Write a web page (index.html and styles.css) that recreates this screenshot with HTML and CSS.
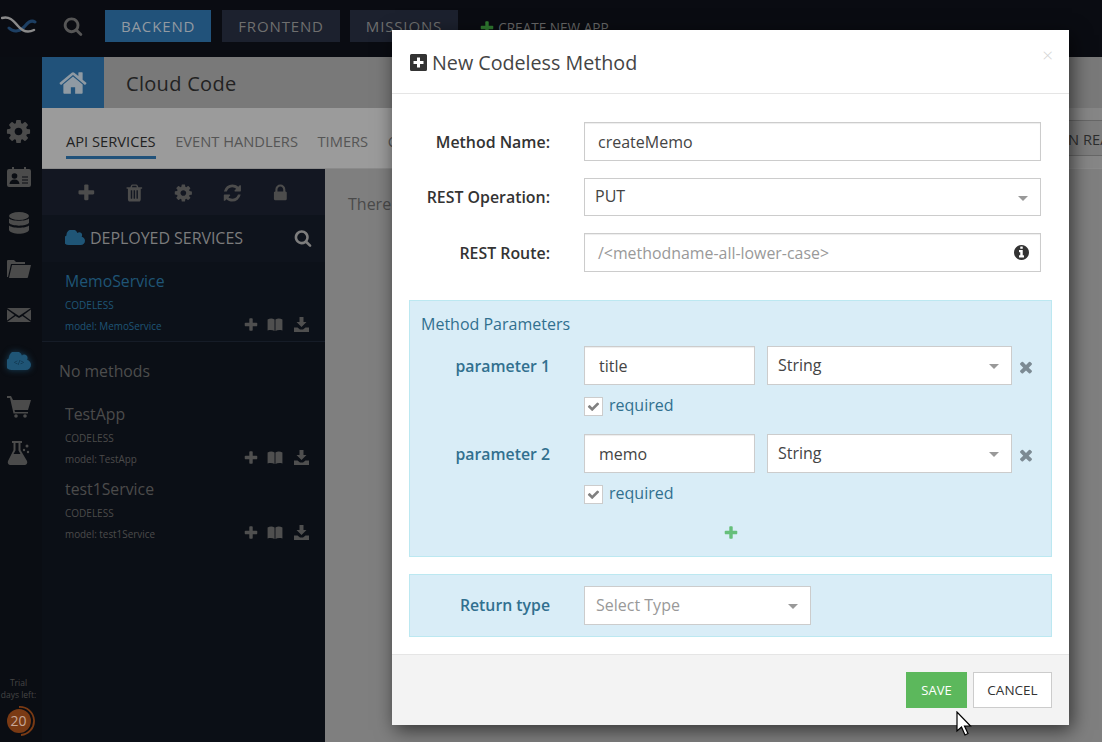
FILE: index.html
```html
<!DOCTYPE html>
<html lang="en">
<head>
    <meta charset="UTF-8">
    <title>Cloud Code</title>
    <link rel="stylesheet" href="styles.css">
</head>
<body>
    <svg class="sprites" width="0" height="0">
        <symbol id="i-search" viewBox="0 0 1792 1792"><path d="M1216 832q0-185-131.5-316.5t-316.5-131.5-316.5 131.5-131.5 316.5 131.5 316.5 316.5 131.5 316.5-131.5 131.5-316.5zm512 832q0 52-38 90t-90 38q-54 0-90-38l-343-342q-179 124-399 124-143 0-273.5-55.5t-225-150-150-225-55.5-273.5 55.5-273.5 150-225 225-150 273.5-55.5 273.5 55.5 225 150 150 225 55.5 273.5q0 220-124 399l343 343q37 37 37 90z"/></symbol>
        <symbol id="i-plus" viewBox="0 0 1792 1792"><path d="M1600 736v192q0 40-28 68t-68 28h-416v416q0 40-28 68t-68 28h-192q-40 0-68-28t-28-68v-416h-416q-40 0-68-28t-28-68v-192q0-40 28-68t68-28h416v-416q0-40 28-68t68-28h192q40 0 68 28t28 68v416h416q40 0 68 28t28 68z"/></symbol>
        <symbol id="i-times" viewBox="0 0 1792 1792"><path d="M1490 1322q0 40-28 68l-136 136q-28 28-68 28t-68-28l-294-294-294 294q-28 28-68 28t-68-28l-136-136q-28-28-28-68t28-68l294-294-294-294q-28-28-28-68t28-68l136-136q28-28 68-28t68 28l294 294 294-294q28-28 68-28t68 28l136 136q28 28 28 68t-28 68l-294 294 294 294q28 28 28 68z"/></symbol>
        <symbol id="i-cog" viewBox="0 0 1792 1792"><path d="M1152 896q0-106-75-181t-181-75-181 75-75 181 75 181 181 75 181-75 75-181zm512-109v222q0 12-8 23t-20 13l-185 28q-19 54-39 91 35 50 107 138 10 12 10 25t-9 23q-27 37-99 108t-94 71q-12 0-26-9l-138-108q-44 23-91 38-16 136-29 186-7 28-36 28h-222q-14 0-24.5-8.5t-11.5-21.5l-28-184q-49-16-90-37l-141 107q-10 9-25 9-14 0-25-11-126-114-165-168-7-10-7-23 0-12 8-23 15-21 51-66.5t54-70.5q-27-50-41-99l-183-27q-13-2-21-12.5t-8-23.5v-222q0-12 8-23t19-13l186-28q14-46 39-92-40-57-107-138-10-12-10-24 0-10 9-23 26-36 98.5-107.5t94.5-71.5q13 0 26 10l138 107q44-23 91-38 16-136 29-186 7-28 36-28h222q14 0 24.5 8.5t11.5 21.5l28 184q49 16 90 37l142-107q9-9 24-9 13 0 25 10 129 119 165 170 7 8 7 22 0 12-8 23-15 21-51 66.5t-54 70.5q26 50 41 98l183 28q13 2 21 12.5t8 23.5z"/></symbol>
        <symbol id="i-home" viewBox="0 0 1792 1792"><path d="M1472 992v480q0 26-19 45t-45 19h-384v-384h-256v384h-384q-26 0-45-19t-19-45v-480q0-1 .5-3t.5-3l575-474 575 474q1 2 1 6zm223-69l-62 74q-8 9-21 11h-3q-13 0-21-7l-692-577-692 577q-12 8-24 7-13-2-21-11l-62-74q-8-10-7-23.5t11-21.5l719-599q32-26 76-26t76 26l244 204v-195q0-14 9-23t23-9h192q14 0 23 9t9 23v408l219 182q10 8 11 21.5t-7 23.5z"/></symbol>
        <symbol id="i-lock" viewBox="0 0 1792 1792"><path d="M640 768h512v-192q0-106-75-181t-181-75-181 75-75 181v192zm832 96v576q0 40-28 68t-68 28h-960q-40 0-68-28t-28-68v-576q0-40 28-68t68-28h32v-192q0-184 132-316t316-132 316 132 132 316v192h32q40 0 68 28t28 68z"/></symbol>
        <symbol id="i-refresh" viewBox="0 0 1792 1792"><path d="M1639 1056q0 5-1 7-64 268-268 434.5t-478 166.5q-146 0-282.5-55t-243.5-157l-129 129q-19 19-45 19t-45-19-19-45v-448q0-26 19-45t45-19h448q26 0 45 19t19 45-19 45l-137 137q71 66 161 102t187 36q134 0 250-65t186-179q11-17 53-117 8-23 30-23h192q13 0 22.5 9.5t9.5 22.5zm25-800v448q0 26-19 45t-45 19h-448q-26 0-45-19t-19-45 19-45l138-138q-148-137-349-137-134 0-250 65t-186 179q-11 17-53 117-8 23-30 23h-199q-13 0-22.5-9.5t-9.5-22.5v-7q65-268 270-434.5t480-166.5q146 0 284 55.5t245 156.5l130-129q19-19 45-19t45 19 19 45z"/></symbol>
        <symbol id="i-trash" viewBox="0 0 1792 1792"><path d="M704 1376v-704q0-14-9-23t-23-9h-64q-14 0-23 9t-9 23v704q0 14 9 23t23 9h64q14 0 23-9t9-23zm256 0v-704q0-14-9-23t-23-9h-64q-14 0-23 9t-9 23v704q0 14 9 23t23 9h64q14 0 23-9t9-23zm256 0v-704q0-14-9-23t-23-9h-64q-14 0-23 9t-9 23v704q0 14 9 23t23 9h64q14 0 23-9t9-23zm-544-992h448l-48-117q-7-9-17-11h-317q-10 2-17 11zm928 32v64q0 14-9 23t-23 9h-96v948q0 83-47 143.5t-113 60.5h-832q-66 0-113-58.5t-47-141.5v-952h-96q-14 0-23-9t-9-23v-64q0-14 9-23t23-9h309l70-167q15-37 54-63t79-26h320q40 0 79 26t54 63l70 167h309q14 0 23 9t9 23z"/></symbol>
        <symbol id="i-cloud" viewBox="0 200 1792 1400"><path d="M1792 1152q0 159-112.5 271.5t-271.5 112.5h-1088q-185 0-316.5-131.5t-131.5-316.5q0-132 71-241.5t187-163.5q-2-28-2-43 0-212 150-362t362-150q158 0 286.5 88t187.5 230q70-62 166-62 106 0 181 75t75 181q0 75-41 138 129 30 213 134.5t84 239.5z"/></symbol>
        <symbol id="i-check" viewBox="0 0 1792 1792"><path d="M1671 566q0 40-28 68l-724 724-136 136q-28 28-68 28t-68-28l-136-136-362-362q-28-28-28-68t28-68l136-136q28-28 68-28t68 28l294 295 656-657q28-28 68-28t68 28l136 136q28 28 28 68z"/></symbol>
        <symbol id="i-info" viewBox="128 128 1536 1536"><path d="M1152 1376v-160q0-14-9-23t-23-9h-96v-512q0-14-9-23t-23-9h-320q-14 0-23 9t-9 23v160q0 14 9 23t23 9h96v320h-96q-14 0-23 9t-9 23v160q0 14 9 23t23 9h448q14 0 23-9t9-23zm-128-896v-160q0-14-9-23t-23-9h-192q-14 0-23 9t-9 23v160q0 14 9 23t23 9h192q14 0 23-9t9-23zm640 416q0 209-103 385.5t-279.5 279.5-385.5 103-385.5-103-279.5-279.5-103-385.5 103-385.5 279.5-279.5 385.5-103 385.5 103 279.5 279.5 103 385.5z"/></symbol>
        <symbol id="i-plus-square" viewBox="0 0 17 17"><path d="M1.500 0H15.500Q17 0 17 1.500V15.500Q17 17 15.500 17H1.500Q0 17 0 15.500V1.500Q0 0 1.500 0ZM7 3.500V7H3.500V10H7V13.500H10V10H13.500V7H10V3.500Z"/></symbol>
        <symbol id="i-book" viewBox="0 0 16 14"><path d="M0 1.500C2.500 .3 5.500 .3 7.500 1.500V14C5.500 12.800 2.500 12.800 0 13.500zM8.500 1.500C10.500 .3 13.500 .3 16 1.500V13.500C13.500 12.800 10.500 12.800 8.500 14z"/></symbol>
        <symbol id="i-download" viewBox="0 0 15 15"><path d="M5.500 0H9.500V5H12.500L7.500 10 2.500 5H5.500zM0 10.500H3.500L6 12.500H9L11.500 10.500H15V15H0z"/></symbol>
    </svg>

    <div class="topbar">
        <div class="logo">
            <svg width="36" height="20" viewBox="0 0 36 20" fill="none" stroke-linecap="round">
                <path d="M8 13C13 18 20 16 24 11S31 5 34 7" stroke="#1d3f63" stroke-width="3"/>
                <path d="M1 3C8 1 12 5 17 11S27 18 33 15" stroke="#8a8a8a" stroke-width="2.500"/>
            </svg>
        </div>
        <svg class="top-search"><use href="#i-search"/></svg>
        <a class="top-btn active">BACKEND</a>
        <a class="top-btn">FRONTEND</a>
        <a class="top-btn">MISSIONS</a>
        <a class="create-app"><svg><use href="#i-plus"/></svg>CREATE NEW APP</a>
    </div>

    <div class="layout">
        <div class="rail">
            <div class="rail-icons">
                <div class="rail-item"><svg width="27" height="27"><use href="#i-cog"/></svg></div>
                <div class="rail-item">
                    <svg width="24" height="20" viewBox="0 0 24 20">
                        <path d="M2 2H5V0H7V2H17V0H19V2H22Q24 2 24 4V18Q24 20 22 20H2Q0 20 0 18V4Q0 2 2 2Z"/>
                        <circle cx="7.500" cy="9" r="2.800" fill="#0a0d13"/>
                        <path d="M2.500 17Q3 12.500 7.500 12.500T12.500 17Z" fill="#0a0d13"/>
                        <path d="M15 10H21M15 13H21M15 16H21" stroke="#0a0d13" stroke-width="1"/>
                    </svg>
                </div>
                <div class="rail-item">
                    <svg width="20" height="22" viewBox="0 0 20 22">
                        <ellipse cx="10" cy="4" rx="10" ry="4"/>
                        <path d="M0 6.500C3 9.500 17 9.500 20 6.500V11C17 14.500 3 14.500 0 11zM0 13.500C3 16.500 17 16.500 20 13.500V18C18 23 2 23 0 18z"/>
                    </svg>
                </div>
                <div class="rail-item">
                    <svg width="24" height="18" viewBox="0 0 24 18">
                        <path d="M0 1Q0 0 1 0H7L9 2H18V4H4L1 17H0zM5 5H24L21 17Q21 18 20 18H2z"/>
                    </svg>
                </div>
                <div class="rail-item">
                    <svg width="24" height="14" viewBox="0 0 24 14">
                        <path d="M0 0H24L12 8zM0 1.500L7.500 7 0 12.500zM24 1.500V12.500L16.500 7zM0 14L8.500 8 12 10 15.500 8 24 14z"/>
                    </svg>
                </div>
                <div class="rail-item">
                    <svg class="rail-cloud" width="24" height="19" viewBox="0 0 24 19">
                        <use href="#i-cloud" width="24" height="19"/>
                        <text x="12" y="13" text-anchor="middle">&lt;/&gt;</text>
                    </svg>
                </div>
                <div class="rail-item">
                    <svg width="24" height="22" viewBox="0 0 24 22">
                        <path d="M0 0H4L6 4H24L21 14H7.500L8 16H21V17.500H6.500L3 2H0z"/>
                        <circle cx="9" cy="20" r="1.800"/><circle cx="18" cy="20" r="1.800"/>
                    </svg>
                </div>
                <div class="rail-item">
                    <svg width="24" height="24" viewBox="0 0 24 24">
                        <path d="M5 0H15V2H13.500V9L20 20Q21 23 18 24H3Q0 23 1 20L6.500 9V2H5zM8.500 2V9.500L6.500 13H13.500L11.500 9.500V2z"/>
                        <circle cx="20" cy="5" r="1.500"/><circle cx="17" cy="9" r="1.200"/><circle cx="21" cy="11" r="1.200"/>
                    </svg>
                </div>
            </div>
            <div class="trial">
                <div class="trial-text">Trial<br>days left:</div>
                <div class="trial-badge">
                    <svg width="32" height="32" viewBox="0 0 32 32" fill="none"><path d="M16 2A14 14 0 0 1 18 30" stroke="#7a3a14" stroke-width="1.800"/></svg>
                    <span>20</span>
                </div>
            </div>
        </div>

        <div class="main">
            <div class="page-head">
                <div class="home-box"><svg width="30" height="30"><use href="#i-home"/></svg></div>
                <h1>Cloud Code</h1>
            </div>
            <div class="tabs">
                <a class="tab current">API SERVICES</a>
                <a class="tab">EVENT HANDLERS</a>
                <a class="tab">TIMERS</a>
                <a class="tab">CODE</a>
                <a class="tab-action">OPEN REAL TIME</a>
            </div>
            <div class="workspace">
                <div class="services">
                    <div class="svc-tools">
                        <svg><use href="#i-plus"/></svg>
                        <svg><use href="#i-trash"/></svg>
                        <svg><use href="#i-cog"/></svg>
                        <svg><use href="#i-refresh"/></svg>
                        <svg><use href="#i-lock"/></svg>
                    </div>
                    <div class="svc-title">
                        <svg class="svc-cloud"><use href="#i-cloud"/></svg>
                        <span>DEPLOYED SERVICES</span>
                        <svg class="svc-search"><use href="#i-search"/></svg>
                    </div>
                    <div class="svc-item selected">
                        <div class="svc-name">MemoService</div>
                        <div class="svc-type">CODELESS</div>
                        <div class="svc-bottom">
                            <span class="svc-model">model: MemoService</span>
                            <span class="svc-actions">
                                <svg class="act-plus"><use href="#i-plus"/></svg>
                                <svg class="act-book"><use href="#i-book"/></svg>
                                <svg class="act-down"><use href="#i-download"/></svg>
                            </span>
                        </div>
                    </div>
                    <div class="no-methods">No methods</div>
                    <div class="svc-item">
                        <div class="svc-name">TestApp</div>
                        <div class="svc-type">CODELESS</div>
                        <div class="svc-bottom">
                            <span class="svc-model">model: TestApp</span>
                            <span class="svc-actions">
                                <svg class="act-plus"><use href="#i-plus"/></svg>
                                <svg class="act-book"><use href="#i-book"/></svg>
                                <svg class="act-down"><use href="#i-download"/></svg>
                            </span>
                        </div>
                    </div>
                    <div class="svc-item">
                        <div class="svc-name">test1Service</div>
                        <div class="svc-type">CODELESS</div>
                        <div class="svc-bottom">
                            <span class="svc-model">model: test1Service</span>
                            <span class="svc-actions">
                                <svg class="act-plus"><use href="#i-plus"/></svg>
                                <svg class="act-book"><use href="#i-book"/></svg>
                                <svg class="act-down"><use href="#i-download"/></svg>
                            </span>
                        </div>
                    </div>
                </div>
                <div class="empty-panel">There</div>
            </div>
        </div>
    </div>

    <div class="modal">
        <div class="modal-head">
            <svg class="head-icon"><use href="#i-plus-square"/></svg>
            <h2>New Codeless Method</h2>
            <span class="close">×</span>
        </div>
        <div class="modal-body">
            <div class="form-row">
                <label>Method Name:</label>
                <div class="field"><span class="value">createMemo</span></div>
            </div>
            <div class="form-row">
                <label>REST Operation:</label>
                <div class="field select"><span>PUT</span><i class="caret"></i></div>
            </div>
            <div class="form-row">
                <label>REST Route:</label>
                <div class="field"><span class="value hint">/&lt;methodname-all-lower-case&gt;</span><svg class="info"><use href="#i-info"/></svg></div>
            </div>

            <div class="panel params">
                <div class="panel-title">Method Parameters</div>
                <div class="param-row">
                    <label>parameter 1</label>
                    <div class="field name"><span class="value">title</span></div>
                    <div class="field select type"><span>String</span><i class="caret"></i></div>
                    <svg class="remove"><use href="#i-times"/></svg>
                </div>
                <div class="required"><span class="box"><svg><use href="#i-check"/></svg></span>required</div>
                <div class="param-row">
                    <label>parameter 2</label>
                    <div class="field name"><span class="value">memo</span></div>
                    <div class="field select type"><span>String</span><i class="caret"></i></div>
                    <svg class="remove"><use href="#i-times"/></svg>
                </div>
                <div class="required"><span class="box"><svg><use href="#i-check"/></svg></span>required</div>
                <div class="add-param"><svg><use href="#i-plus"/></svg></div>
            </div>

            <div class="panel returns">
                <div class="param-row">
                    <label>Return type</label>
                    <div class="field select return"><span class="hint">Select Type</span><i class="caret"></i></div>
                </div>
            </div>
        </div>
        <div class="modal-foot">
            <button class="btn save">SAVE</button>
            <button class="btn">CANCEL</button>
        </div>
    </div>

    <svg class="cursor" width="18" height="26" viewBox="0 0 18 26">
        <path d="M1 1V20L5.500 16 9 24 12 22.500 8.500 15H14.500z" fill="#fff" stroke="#000" stroke-width="1.200"/>
    </svg>
</body>
</html>
```

FILE: styles.css
```css
* {
    box-sizing: border-box;
}
html, body {
    height: 100%;
}
body {
    margin: 0;
    overflow: hidden;
    position: relative;
    display: flex;
    flex-direction: column;
    background-color: #0a0d13;
    color: #333;
    font-family: "Open Sans", "Liberation Sans", sans-serif;
    font-size: 16px;
}
.sprites {
    position: absolute;
}
h1, h2 {
    margin: 0;
    font-weight: 400;
}

/* top bar */
.topbar {
    flex: 0 0 57px;
    display: flex;
    align-items: flex-start;
    padding-top: 10px;
    background-color: #0a0c12;
}
.logo {
    width: 42px;
    height: 32px;
    display: flex;
    align-items: center;
    padding: 0 0 2px 1px;
}
.top-search {
    width: 20px;
    height: 20px;
    margin: 6px 22px 0 21px;
    fill: #565656;
}
.top-btn {
    height: 32px;
    line-height: 33px;
    padding: 0 16px;
    margin-right: 10px;
    background-color: #1c212e;
    color: #6f6f6f;
    font-size: 15px;
    letter-spacing: .85px;
}
.top-btn.active {
    background-color: #21527a;
    color: #929aa2;
    margin-right: 11px;
}
.create-app {
    display: flex;
    align-items: center;
    height: 32px;
    margin-left: 11px;
    padding-top: 3px;
    color: #666;
    font-size: 13.600px;
    white-space: nowrap;
}
.create-app svg {
    width: 16px;
    height: 16px;
    margin-right: 3px;
    fill: #2f7a30;
}

.layout {
    flex: 1;
    display: flex;
    min-height: 0;
}

/* left rail */
.rail {
    flex: 0 0 42px;
    display: flex;
    flex-direction: column;
    justify-content: space-between;
    padding-right: 5px;
    background-color: #0a0d13;
}
.rail-icons {
    padding-top: 51px;
}
.rail-item {
    height: 46px;
    display: flex;
    align-items: center;
    justify-content: center;
}
.rail-item svg {
    fill: #4b4b4b;
}
.rail-item .rail-cloud {
    fill: #1f5576;
    filter: drop-shadow(0 0 3px #17405a);
}
.rail-cloud text {
    fill: #0e2f45;
    font-family: "Open Sans", sans-serif;
    font-size: 7px;
}
.trial {
    text-align: center;
    padding-bottom: 9px;
}
.trial-text {
    margin: 0 -3px 8px;
    color: #464646;
    font-size: 8.500px;
    line-height: 12px;
    white-space: nowrap;
}
.trial-badge {
    position: relative;
    width: 24px;
    height: 24px;
    margin: 0 auto;
    border-radius: 50%;
    background-color: #7a3a14;
    color: #c7a898;
    font-size: 14px;
    line-height: 24px;
}
.trial-badge svg {
    position: absolute;
    left: -4px;
    top: -4px;
}
.trial-badge span {
    position: relative;
}

/* page */
.main {
    flex: 1;
    min-width: 0;
    display: flex;
    flex-direction: column;
}
.page-head {
    flex: 0 0 51px;
    display: flex;
    align-items: center;
    background-color: #797979;
}
.home-box {
    width: 62px;
    height: 51px;
    display: flex;
    align-items: center;
    justify-content: center;
    background-color: #21527a;
    fill: #8f9aa3;
}
.page-head h1 {
    margin-left: 22px;
    padding-top: 2px;
    color: #222;
    font-size: 20px;
    letter-spacing: .3px;
}
.tabs {
    flex: 0 0 61px;
    display: flex;
    align-items: flex-start;
    padding: 22px 0 0 24px;
    background: linear-gradient(90deg, #9b9b9b 60%, #868686 60%);
    border-bottom: 1px solid #8a8a8a;
    overflow: hidden;
    font-size: 14.700px;
    white-space: nowrap;
}
.tab {
    height: 29px;
    line-height: 22px;
    margin-right: 19.500px;
    color: #555;
}
.tab.current {
    color: #222;
    border-bottom: 3px solid #21527a;
}
.tab-action {
    flex-shrink: 0;
    margin: -10px 0 0 581px;
    padding: 0 12px;
    height: 36px;
    line-height: 36px;
    border-top: 1px solid #676767;
    border-bottom: 1px solid #676767;
    background-color: #7d7d7d;
    color: #2d2d2d;
}
.workspace {
    flex: 1;
    display: flex;
    min-height: 0;
}

/* services column */
.services {
    flex: 0 0 283px;
    background-color: #0b0f16;
}
.svc-tools {
    height: 46px;
    display: flex;
    align-items: center;
    padding: 1px 0 0 19.500px;
    background-color: #131722;
    fill: #4c4c4c;
}
.svc-tools svg {
    width: 48.700px;
    height: 20px;
}
.svc-title {
    height: 47px;
    display: flex;
    align-items: center;
    padding: 0 13px 2px 23px;
    background-color: #0e131c;
    color: #7c7c7c;
    font-size: 16px;
    letter-spacing: -.05px;
}
.svc-cloud {
    width: 20px;
    height: 16px;
    margin-right: 5px;
    fill: #1f5576;
}
.svc-search {
    width: 18px;
    height: 18px;
    margin-left: auto;
    fill: #7d7d7d;
}
.svc-item {
    height: 75px;
    padding: 8px 16px 0 23px;
    color: #4b4b4b;
}
.svc-item.selected {
    height: 80px;
    background-color: #0c1119;
    border-bottom: 1px solid #161c27;
    color: #1f5576;
}
.svc-name {
    font-size: 15.800px;
    line-height: 22px;
}
.svc-type {
    margin-top: 6px;
    font-size: 10px;
    line-height: 14px;
}
.svc-bottom {
    display: flex;
    justify-content: space-between;
    align-items: center;
    margin-top: 6px;
    height: 16px;
    font-size: 9.900px;
}
.svc-actions {
    display: flex;
    align-items: center;
    margin-top: -3px;
    fill: #4f4f4f;
}
.act-plus {
    width: 16px;
    height: 16px;
}
.act-book {
    width: 16px;
    height: 13px;
    margin-left: 8px;
}
.act-down {
    width: 15px;
    height: 15px;
    margin-left: 11px;
}
.no-methods {
    height: 53px;
    padding: 18px 0 0 17px;
    font-size: 15.800px;
    line-height: 22px;
    color: #4d4d4d;
}
.empty-panel {
    flex: 1;
    padding: 24px 0 0 23px;
    background-color: #7f7f7f;
    color: #4a4a4a;
}

/* modal */
.modal {
    position: absolute;
    left: 392px;
    top: 30px;
    width: 677px;
    background-color: #fff;
    box-shadow: 3px 5px 18px rgba(0, 0, 0, .6);
}
.modal-head {
    position: relative;
    height: 64px;
    display: flex;
    align-items: center;
    padding: 2px 0 0 18px;
    border-bottom: 1px solid #e5e5e5;
}
.head-icon {
    width: 17px;
    height: 17px;
    margin-right: 5px;
    fill: #333;
}
.modal-head h2 {
    color: #444;
    font-size: 19.700px;
}
.close {
    position: absolute;
    right: 16px;
    top: 13px;
    color: #d4d4d4;
    font-size: 19px;
    font-weight: 300;
    line-height: 24px;
}
.modal-body {
    padding: 28px 17px 17px;
}
.form-row {
    display: flex;
    align-items: center;
    gap: 34px;
    margin: 0 11px 17px 0;
}
.form-row label {
    flex: 0 0 141px;
    text-align: right;
    font-size: 15.900px;
    font-weight: 600;
    white-space: nowrap;
}
.form-row .select {
    height: 38px;
}
.field {
    position: relative;
    flex: 1;
    height: 39px;
    display: flex;
    align-items: center;
    padding: 0 13px;
    background-color: #fff;
    border: 1px solid #ccc;
    box-shadow: inset 0 1px 1px rgba(0, 0, 0, .075);
    color: #444;
}
.value.hint, .hint {
    color: #999;
}
.value.hint {
    font-size: 15.900px;
}
.field.name {
    padding-left: 14px;
}
.select {
    padding: 0 10px 2px;
    box-shadow: none;
}
.caret {
    position: absolute;
    right: 12px;
    top: 17px;
    border-top: 5px solid #999;
    border-left: 5px solid transparent;
    border-right: 5px solid transparent;
}
.info {
    position: absolute;
    right: 11px;
    top: 11px;
    width: 15px;
    height: 15px;
    fill: #333;
}
.panel {
    background-color: #d9edf7;
    border: 1px solid #bce8f1;
    color: #31708f;
}
.params {
    margin-top: 28px;
    padding: 12px 0 15px;
}
.panel-title {
    margin: 0 0 11px 11px;
    line-height: 22px;
}
.param-row {
    display: flex;
    align-items: center;
}
.param-row label {
    flex: 0 0 140px;
    margin-right: 34px;
    text-align: right;
    font-size: 15.800px;
    font-weight: 600;
}
.returns label {
    padding-bottom: 2px;
}
.field.name {
    flex: 0 0 171px;
    margin-right: 12px;
}
.field.type {
    flex: 0 0 245px;
}
.field.return {
    flex: 0 0 227px;
    padding-left: 11px;
}
.remove {
    width: 18px;
    height: 18px;
    margin: 2px 0 0 4.500px;
    fill: #7c8a93;
}
.required {
    display: flex;
    align-items: flex-start;
    height: 19px;
    margin: 12px 0 18px 174px;
    line-height: 17px;
}
.box {
    width: 19px;
    height: 19px;
    margin-right: 6px;
    display: flex;
    align-items: center;
    justify-content: center;
    background-color: #fff;
    border: 1px solid #ccc;
    fill: #808080;
}
.box svg {
    width: 13px;
    height: 13px;
}
.add-param {
    display: flex;
    justify-content: center;
    margin-top: 21px;
    padding-left: 1px;
    height: 16px;
    fill: #66bf7a;
}
.add-param svg {
    width: 18px;
    height: 16px;
}
.returns {
    margin-top: 17px;
    padding: 11px 0;
}
.modal-foot {
    height: 71px;
    display: flex;
    justify-content: flex-end;
    align-items: flex-start;
    gap: 6px;
    padding: 17px 17px 0 0;
    background-color: #f3f3f3;
    border-top: 1px solid #e5e5e5;
}
.btn {
    width: 79px;
    height: 36px;
    padding: 0;
    background-color: #fff;
    border: 1px solid #ccc;
    color: #333;
    font-family: inherit;
    font-size: 13.500px;
}
.btn.save {
    width: 61px;
    background-color: #5cb85c;
    border-color: #5cb85c;
    color: #fff;
    font-size: 13px;
}
.cursor {
    position: absolute;
    left: 956px;
    top: 711px;
}
```
